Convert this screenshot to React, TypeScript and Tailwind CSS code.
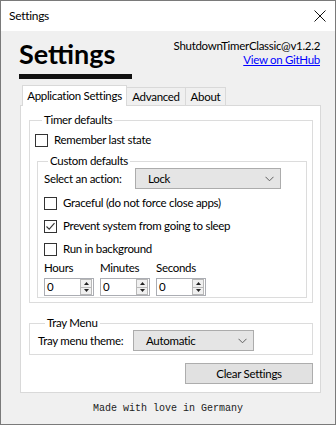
import React from "react";

const ui = { fontFamily: "Lato, 'Liberation Sans', sans-serif" };

const Check = ({ checked, label }: { checked?: boolean; label: string }) => (
  <div className="flex items-center h-[18px] gap-[6px]">
    <span className="w-[13px] h-[13px] border border-[#333333] bg-white flex items-center justify-center">
      {checked && (
        <svg width="11" height="11" viewBox="0 0 11 11">
          <path d="M1.5 5.5 L4.2 8.2 L9.5 2.2" fill="none" stroke="#333" strokeWidth="1.1" />
        </svg>
      )}
    </span>
    <span>{label}</span>
  </div>
);

const Combo = ({ value, width }: { value: string; width: string }) => (
  <div className={`${width} h-[21px] bg-[#e5e5e5] border border-[#acacac] flex items-center justify-between pl-[12px] pr-[6px]`}>
    <span>{value}</span>
    <svg width="9" height="6" viewBox="0 0 9 6">
      <path d="M0.5 0.8 L4.5 4.8 L8.5 0.8" fill="none" stroke="#606060" strokeWidth="1" />
    </svg>
  </div>
);

const Spin = ({ label }: { label: string }) => (
  <div className="flex flex-col w-[50px]">
    <span className="leading-[15px]">{label}</span>
    <div className="mt-[3px] h-[18px] border border-[#abadb3] bg-white flex items-center justify-between pl-[2px] pr-[1px]">
      <span>0</span>
      <div className="flex flex-col w-[12px] h-[16px] border border-[#b8b8b8] bg-[#f0f0f0]">
        <div className="flex-1 flex items-center justify-center border-b border-[#b8b8b8]">
          <svg width="5" height="3" viewBox="0 0 5 3"><path d="M0 3 L2.5 0 L5 3 Z" fill="#222" /></svg>
        </div>
        <div className="flex-1 flex items-center justify-center">
          <svg width="5" height="3" viewBox="0 0 5 3"><path d="M0 0 L2.5 3 L5 0 Z" fill="#222" /></svg>
        </div>
      </div>
    </div>
  </div>
);

export default function App() {
  return (
    <div
      className="w-[336px] h-[425px] border border-[#7a7a7a] bg-[#f0f0f0] flex flex-col text-[11.5px] tracking-[-0.3px] text-black"
      style={ui}
    >
      {/* title bar */}
      <div className="h-[30px] bg-white flex items-center justify-between pl-[8px] pr-[9px]">
        <span className="text-[12px]">Settings</span>
        <svg width="12" height="12" viewBox="0 0 12 12">
          <path d="M0.5 0.5 L11.5 11.5 M11.5 0.5 L0.5 11.5" stroke="#111" strokeWidth="1" />
        </svg>
      </div>

      {/* header */}
      <div className="h-[54px] flex justify-between pl-[18px] pr-[15px]">
        <div className="pt-[8px] flex flex-col">
          <span className="text-[27px] font-bold leading-[30px] tracking-normal">Settings</span>
          <div className="mt-[5px] h-[5px] w-[113px] bg-[#111]" />
        </div>
        <div className="pt-[8px] flex flex-col items-end leading-[14px]">
          <span>ShutdownTimerClassic@v1.2.2</span>
          <span className="text-[#0000ff] underline">View on GitHub</span>
        </div>
      </div>

      {/* tabs */}
      <div className="ml-[19px] w-[301px] flex flex-col">
        <div className="h-[20px] flex items-end pl-[2px] whitespace-nowrap">
          <div className="relative z-10 -mb-px h-[21px] w-[105px] bg-white border border-b-0 border-[#d9d9d9] flex items-center justify-center">
            Application Settings
          </div>
          <div className="h-[18px] w-[60px] -ml-px border border-b-0 border-[#d9d9d9] flex items-center justify-center">
            Advanced
          </div>
          <div className="h-[18px] w-[41px] -ml-px border border-b-0 border-[#d9d9d9] flex items-center justify-center">
            About
          </div>
        </div>

        {/* panel */}
        <div className="h-[288px] bg-white border border-[#d9d9d9] pl-[8px] pr-[7px] pt-[7px] flex flex-col">
          <fieldset className="border border-[#dcdcdc] pl-[5px] pr-[5px] pb-[4px]">
            <legend className="ml-[7px] px-[2px] leading-[14px]">Timer defaults</legend>
            <div className="mt-[4px]">
              <Check label="Remember last state" />
            </div>
            <fieldset className="mt-[5px] ml-[2px] border border-[#dcdcdc] pl-[6px] pb-[1px]">
              <legend className="ml-[4px] px-[2px] leading-[14px]">Custom defaults</legend>
              <div className="flex items-center h-[21px]">
                <span className="w-[91px]">Select an action:</span>
                <Combo value="Lock" width="w-[146px]" />
              </div>
              <div className="mt-[5px] flex flex-col gap-[5px]">
                <Check label="Graceful (do not force close apps)" />
                <Check checked label="Prevent system from going to sleep" />
                <Check label="Run in background" />
              </div>
              <div className="mt-[2px] flex gap-[6px]">
                <Spin label="Hours" />
                <Spin label="Minutes" />
                <Spin label="Seconds" />
              </div>
            </fieldset>
          </fieldset>

          <fieldset className="mt-[13px] border border-[#dcdcdc] pl-[8px] pb-[3px]">
            <legend className="ml-[7px] px-[2px] leading-[14px]">Tray Menu</legend>
            <div className="flex items-center h-[21px]">
              <span className="w-[95px]">Tray menu theme:</span>
              <Combo value="Automatic" width="w-[121px]" />
            </div>
          </fieldset>

          <div className="mt-[8px] flex justify-end">
            <button className="w-[128px] h-[21px] bg-[#e1e1e1] border border-[#adadad] flex items-center justify-center">
              Clear Settings
            </button>
          </div>
        </div>
      </div>

      {/* footer */}
      <div className="flex-1 flex items-center justify-center">
        <span className="text-[10px] tracking-normal text-[#222]" style={{ fontFamily: "'Liberation Mono', monospace" }}>
          Made with love in Germany
        </span>
      </div>
    </div>
  );
}
